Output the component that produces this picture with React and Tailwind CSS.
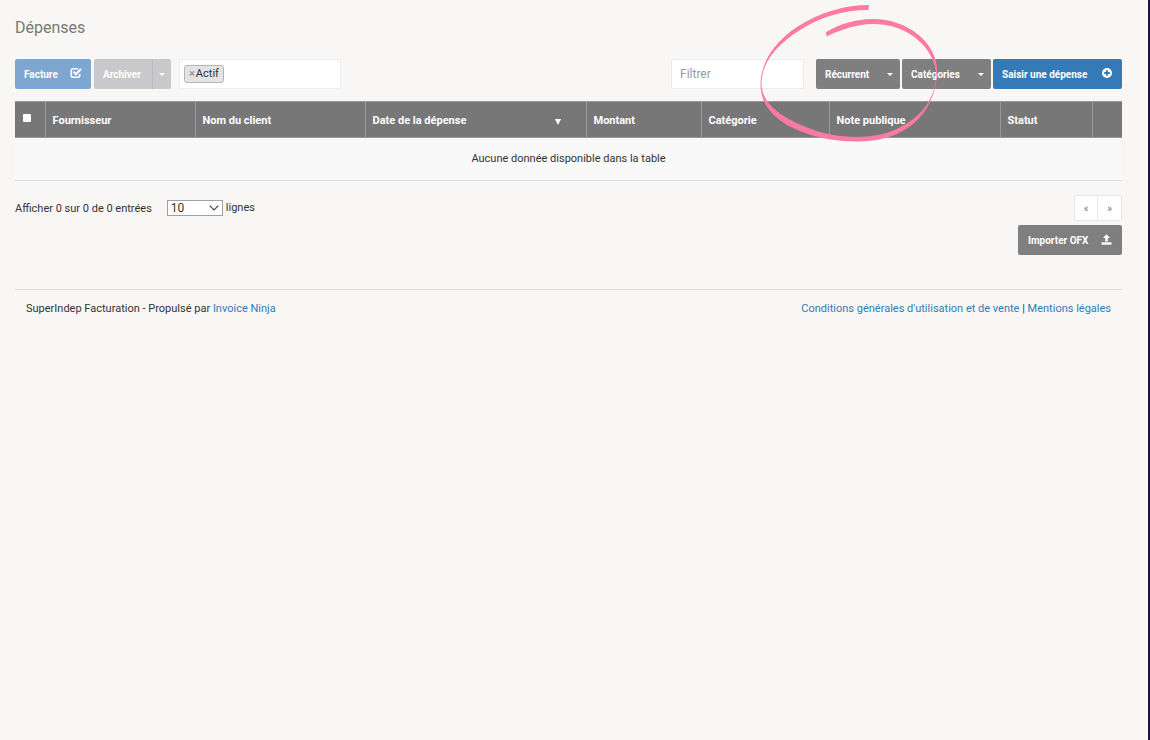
import React from "react";

function CheckIcon() {
  return (
    <svg width="12" height="12" viewBox="0 0 12 12" fill="none" stroke="currentColor" className="mb-[2px] shrink-0" aria-hidden="true">
      <path d="M8 1.800H3A1.700 1.700 0 0 0 1.300 3.500v5A1.700 1.700 0 0 0 3 10.200h5a1.700 1.700 0 0 0 1.700-1.700V7" strokeWidth="1.600" />
      <path d="M3.600 4.800l2.300 2.400 5-5.200" strokeWidth="2" />
    </svg>
  );
}

function PlusIcon() {
  return (
    <svg width="10" height="10" viewBox="0 0 10 10" className="mb-[2px] shrink-0" aria-hidden="true">
      <path
        fill="currentColor"
        fillRule="evenodd"
        d="M5 0a5 5 0 1 0 0 10A5 5 0 0 0 5 0zM4.100 2.200h1.800v1.900h1.900v1.800H5.900v1.900H4.100V5.900H2.200V4.100h1.900z"
      />
    </svg>
  );
}

function UploadIcon() {
  return (
    <svg width="11" height="11" viewBox="0 0 11 11" fill="currentColor" className="mb-[2px] shrink-0" aria-hidden="true">
      <path d="M5.500 0.200L9 4.100H6.800v3.400H4.200V4.100H2z" />
      <path d="M0.500 8.300h10v2.400h-10z" />
    </svg>
  );
}

function Caret() {
  return (
    <svg width="6" height="3" viewBox="0 0 6 3" fill="currentColor" aria-hidden="true">
      <path d="M0 0h6L3 3z" />
    </svg>
  );
}

function Button({ className, children, ...rest }) {
  return (
    <button
      type="button"
      className={"flex h-[30px] items-center rounded-xs text-[10px] font-bold text-white " + className}
      {...rest}
    >
      {children}
    </button>
  );
}

const columns = [
  { label: "Fournisseur", width: "w-[150px]" },
  { label: "Nom du client", width: "w-[170px]" },
  { label: "Date de la dépense", width: "w-[221px]", sorted: true },
  { label: "Montant", width: "w-[115px]" },
  { label: "Catégorie", width: "w-[128px]" },
  { label: "Note publique", width: "w-[171px]" },
  { label: "Statut", width: "w-[92px]" },
];

function Toolbar() {
  return (
    <div className="flex items-center justify-between">
      <div className="flex items-center">
        <Button className="w-[76px] justify-between bg-[#7da6d0] px-[9px]">
          Facture
          <CheckIcon />
        </Button>
        <div className="ml-[3px] flex">
          <Button className="w-[58px] rounded-r-none bg-[#c9c9cb] pl-[9px]">Archiver</Button>
          <Button
            aria-label="Autres actions"
            className="w-[19px] justify-center rounded-l-none border-l border-[#bcbcbe] bg-[#c9c9cb]"
          >
            <Caret />
          </Button>
        </div>
        <div className="ml-2 flex h-[30px] w-[162px] items-center rounded-xs border border-[#ececec] bg-white px-1">
          <span className="flex h-[18px] items-center gap-px rounded-[3px] border border-[#b4b4b4] bg-[#e4e4e4] px-1 text-[11px] text-[#333]">
            <button type="button" aria-label="Retirer Actif" className="font-bold text-[#999]">
              ×
            </button>
            Actif
          </span>
        </div>
      </div>
      <div className="flex items-center">
        <input
          type="text"
          aria-label="Filtrer"
          placeholder="Filtrer"
          className="h-[30px] w-[133px] rounded-xs border border-[#ececec] bg-white px-2 text-[12px] text-[#333] placeholder:text-[#999]"
        />
        <Button className="ml-3 w-[84px] justify-between bg-[#7f7f7f] pr-[7px] pl-[9px]">
          Récurrent
          <Caret />
        </Button>
        <Button className="ml-[2px] w-[89px] justify-between bg-[#7f7f7f] pr-[7px] pl-[9px]">
          Catégories
          <Caret />
        </Button>
        <Button className="ml-[2px] w-[129px] justify-between bg-[#337ab7] pr-[10px] pl-[9px]">
          Saisir une dépense
          <PlusIcon />
        </Button>
      </div>
    </div>
  );
}

function ExpenseTable() {
  return (
    <table className="mt-3 w-full table-fixed border-collapse text-[11px]">
      <thead>
        <tr className="h-9 border-y border-[#999] bg-[#777] text-left text-white">
          <th className="w-[30px] pl-2">
            <input
              type="checkbox"
              aria-label="Tout sélectionner"
              className="mb-1 block size-2 appearance-none rounded-[1px] bg-white"
            />
          </th>
          {columns.map((c) => (
            <th key={c.label} className={"border-l border-[#999] pt-[3px] pl-[7px] font-bold " + c.width}>
              {c.sorted ? (
                <span className="flex items-center justify-between pr-[25px]">
                  {c.label}
                  <svg width="6" height="6" viewBox="0 0 6 6" className="mt-[2px]" fill="currentColor" aria-hidden="true">
                    <path d="M0 0h6L3 6z" />
                  </svg>
                </span>
              ) : (
                c.label
              )}
            </th>
          ))}
          <td className="w-[30px] border-l border-[#999]" />
        </tr>
      </thead>
      <tbody>
        <tr className="h-[43px] border-b border-[#ddd] bg-[#f9f9f9]">
          <td colSpan={9} className="text-center">
            Aucune donnée disponible dans la table
          </td>
        </tr>
      </tbody>
    </table>
  );
}

function TableFooter() {
  return (
    <div className="mt-[14px] flex items-start justify-between">
      <div className="flex items-center pt-1 text-[11px]">
        <span className="pt-[2px]">Afficher 0 sur 0 de 0 entrées</span>
        <label className="ml-[15px] flex items-center gap-[3px]">
          <span className="relative flex items-center">
            <select
              defaultValue="10"
              className="h-4 w-14 appearance-none border border-[#a0a0a0] bg-white pl-[3px] text-[12px] leading-3"
            >
              <option>10</option>
              <option>25</option>
              <option>50</option>
            </select>
            <svg
              width="10"
              height="6"
              viewBox="0 0 10 6"
              fill="none"
              stroke="#444"
              className="pointer-events-none absolute right-1"
              aria-hidden="true"
            >
              <path d="M0.700 0.700L5 5l4.300-4.300" strokeWidth="1.200" />
            </svg>
          </span>
          lignes
        </label>
      </div>
      <div className="flex flex-col items-end gap-1">
        <nav aria-label="Pagination" className="flex text-[10px] text-[#777]">
          <button type="button" aria-label="Précédent" className="h-[26px] w-6 rounded-l-xs border border-[#e7e7e7] bg-white">
            «
          </button>
          <button type="button" aria-label="Suivant" className="h-[26px] w-6 rounded-r-xs border border-l-0 border-[#e7e7e7] bg-white">
            »
          </button>
        </nav>
        <Button className="w-[104px] justify-between bg-[#7f7f7f] px-[10px]">
          Importer OFX
          <UploadIcon />
        </Button>
      </div>
    </div>
  );
}

function PenCircle() {
  return (
    <svg
      width="180"
      height="150"
      viewBox="760 0 180 150"
      fill="#fd7ba2"
      className="pointer-events-none absolute top-0 right-[208px]"
      aria-hidden="true"
    >
      <path d="M869 5C845 5 820 12 797 27C777 40 761 60 760.500 84C760.500 108 778 124 808 134C832 142 866 145 892 136C918 126 934 106 937 75C940 45 909 19 873 19C856 19 840 24 826 32L826.500 36.500C840 30 857 24 873 24C908 24 934 47 936.500 75C934 104 918 120 892 131C866 141 832 137 811 129C781 118 762 104 761.500 84C761.500 62 778 44 800 30C820 17 843 10 868.500 10Z" />
    </svg>
  );
}

export default function App() {
  return (
    <div className="relative min-h-screen border-r-2 border-[#1d1147] bg-[#f8f7f5] pr-[26px] pl-[15px] font-[Roboto,sans-serif] text-[#333]">
      <h1 className="pt-4 text-[16px] leading-6 text-[#777]">Dépenses</h1>
      <div className="mt-[19px]">
        <Toolbar />
      </div>
      <ExpenseTable />
      <TableFooter />
      <footer className="mt-[34px] flex justify-between border-t border-[#ddd] px-[11px] pt-[11px] text-[11px] leading-4">
        <p>
          SuperIndep Facturation - Propulsé par{" "}
          <a href="#invoice-ninja" className="text-[#337ab7]">
            Invoice Ninja
          </a>
        </p>
        <p>
          <a href="#conditions" className="text-[#337ab7]">
            Conditions générales d'utilisation et de vente
          </a>{" "}
          |{" "}
          <a href="#mentions" className="text-[#337ab7]">
            Mentions légales
          </a>
        </p>
      </footer>
      <PenCircle />
    </div>
  );
}
